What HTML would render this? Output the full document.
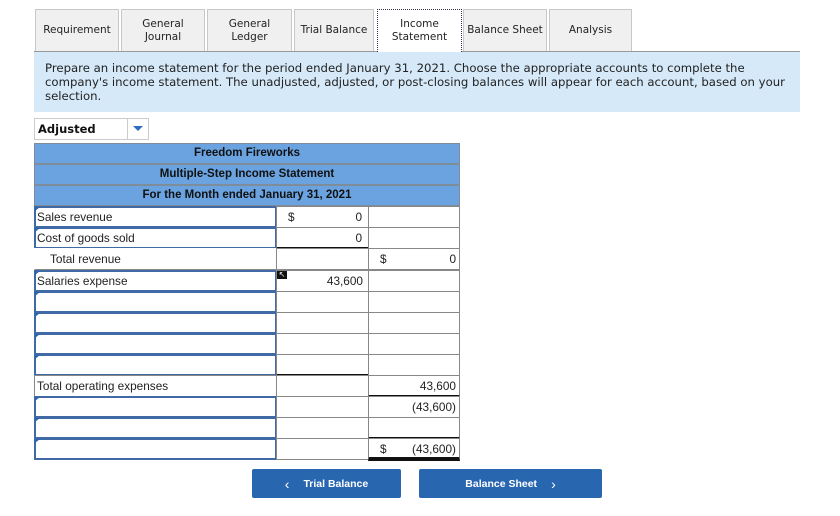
<!DOCTYPE html>
<html><head><meta charset="utf-8"><style>
*{margin:0;padding:0;box-sizing:border-box}
body{width:840px;height:516px;background:#fff;position:relative;overflow:hidden;font-family:"Liberation Sans",Arial,sans-serif;font-size:11.8px;color:#222}
.a{position:absolute}
.tab{position:absolute;top:9px;height:42px;background:#f0f0f0;border:1px solid #c8c8c8;border-bottom:none;font-family:"DejaVu Sans",Verdana,sans-serif;font-size:10.5px;color:#222;display:flex;align-items:center;justify-content:center;text-align:center;line-height:13px}
.hd{position:absolute;left:34px;width:426px;height:21px;background:#6aa3e0;border:1px solid #7f8c99;font-weight:bold;text-align:center;line-height:19px;font-size:11.5px;color:#111}
.c{position:absolute;height:22px;border:1px solid #888;background:#fff;line-height:21px}
.in{position:absolute;left:34px;width:243px;height:22px;border:2px solid #3f6aa6;background:#fff;line-height:19px;padding-left:1px}
.in:before{content:"";position:absolute;left:-1px;top:-1px;border-left:5px solid #2b64b0;border-bottom:4px solid transparent}
.btn{position:absolute;top:469px;height:29px;background:#2966b0;border-radius:2px;color:#fff;font-weight:bold;font-size:10.5px;display:flex;align-items:center;justify-content:center}
</style></head><body>
<div class="a" style="left:34px;top:51px;width:766px;height:1px;background:#999"></div>
<div class="tab" style="left:35px;width:84px">Requirement</div>
<div class="tab" style="left:121px;width:84px">General<br>Journal</div>
<div class="tab" style="left:207px;width:85px">General<br>Ledger</div>
<div class="tab" style="left:294px;width:80px">Trial Balance</div>
<div class="tab" style="left:377px;width:85px;background:#fff;border:1px dotted #335;border-bottom:none;height:43px">Income<br>Statement</div>
<div class="tab" style="left:463px;width:84px">Balance Sheet</div>
<div class="tab" style="left:549px;width:83px">Analysis</div>
<div class="a" style="left:34px;top:52px;width:766px;height:60px;background:#d6e9f8"></div>
<div class="a" style="left:45px;top:61px;white-space:nowrap;font-family:'DejaVu Sans',Verdana,sans-serif;font-size:11.7px;line-height:14px;color:#222">Prepare an income statement for the period ended January 31, 2021. Choose the appropriate accounts to complete the<br>company's income statement. The unadjusted, adjusted, or post-closing balances will appear for each account, based on your<br>selection.</div>
<div class="a" style="left:34px;top:118px;width:115px;height:22px;border:1px solid #ccc;background:#fff;font-family:'DejaVu Sans',Verdana,sans-serif;font-weight:bold;font-size:11.5px;line-height:20px;padding-left:3px;color:#111">Adjusted</div>
<div class="a" style="left:127px;top:119px;width:1px;height:20px;background:#ccc"></div>
<div class="a" style="left:133px;top:126px;border-left:5px solid transparent;border-right:5px solid transparent;border-top:5px solid #2d6cc0"></div>
<div class="hd" style="top:143px">Freedom Fireworks</div>
<div class="hd" style="top:164px">Multiple-Step Income Statement</div>
<div class="hd" style="top:185px">For the Month ended January 31, 2021</div>

<div class="in" style="top:206px">Sales revenue</div>
<div class="c" style="left:276px;top:206px;width:93px"><span style="position:absolute;left:11px">$</span><span style="position:absolute;right:6px">0</span></div>
<div class="c" style="left:368px;top:206px;width:92px"></div>

<div class="in" style="top:227px">Cost of goods sold</div>
<div class="c" style="left:276px;top:227px;width:93px;border-bottom:2px solid #111"><span style="position:absolute;right:6px">0</span></div>
<div class="c" style="left:368px;top:227px;width:92px"></div>

<div class="c" style="left:34px;top:248px;width:243px;padding-left:15px;border-color:#fff;border-bottom-color:#888">Total revenue</div>
<div class="c" style="left:276px;top:248px;width:93px"></div>
<div class="c" style="left:368px;top:248px;width:92px"><span style="position:absolute;left:11px">$</span><span style="position:absolute;right:3px">0</span></div>

<div class="in" style="top:270px">Salaries expense</div>
<div class="c" style="left:276px;top:270px;width:93px"><span style="position:absolute;right:5px">43,600</span></div>
<div class="a" style="left:277px;top:271px;width:10px;height:8px;background:#111;color:#fff;font-size:8px;line-height:8px;text-align:center">&#8598;</div>
<div class="c" style="left:368px;top:270px;width:92px"></div>

<div class="in" style="top:291px"></div><div class="c" style="left:276px;top:291px;width:93px"></div><div class="c" style="left:368px;top:291px;width:92px"></div>
<div class="in" style="top:312px"></div><div class="c" style="left:276px;top:312px;width:93px"></div><div class="c" style="left:368px;top:312px;width:92px"></div>
<div class="in" style="top:333px"></div><div class="c" style="left:276px;top:333px;width:93px"></div><div class="c" style="left:368px;top:333px;width:92px"></div>
<div class="in" style="top:354px"></div><div class="c" style="left:276px;top:354px;width:93px;border-bottom:2px solid #111"></div><div class="c" style="left:368px;top:354px;width:92px"></div>

<div class="c" style="left:34px;top:375px;width:243px;padding-left:2px">Total operating expenses</div>
<div class="c" style="left:276px;top:375px;width:93px"></div>
<div class="c" style="left:368px;top:375px;width:92px;border-bottom:2px solid #111"><span style="position:absolute;right:3px">43,600</span></div>

<div class="in" style="top:396px"></div><div class="c" style="left:276px;top:396px;width:93px"></div>
<div class="c" style="left:368px;top:396px;width:92px"><span style="position:absolute;right:3px">(43,600)</span></div>
<div class="in" style="top:417px"></div><div class="c" style="left:276px;top:417px;width:93px"></div>
<div class="c" style="left:368px;top:417px;width:92px;border-bottom:2px solid #111"></div>
<div class="in" style="top:438px"></div><div class="c" style="left:276px;top:438px;width:93px"></div>
<div class="c" style="left:368px;top:438px;width:92px;border-bottom:4px solid #111;height:23px"><span style="position:absolute;left:11px">$</span><span style="position:absolute;right:3px">(43,600)</span></div>

<div class="btn" style="left:252px;width:149px"><span style="font-size:14px;margin-right:14px;font-weight:normal">&lsaquo;</span>Trial Balance</div>
<div class="btn" style="left:419px;width:183px">Balance Sheet<span style="font-size:14px;margin-left:14px;font-weight:normal">&rsaquo;</span></div>
</body></html>
